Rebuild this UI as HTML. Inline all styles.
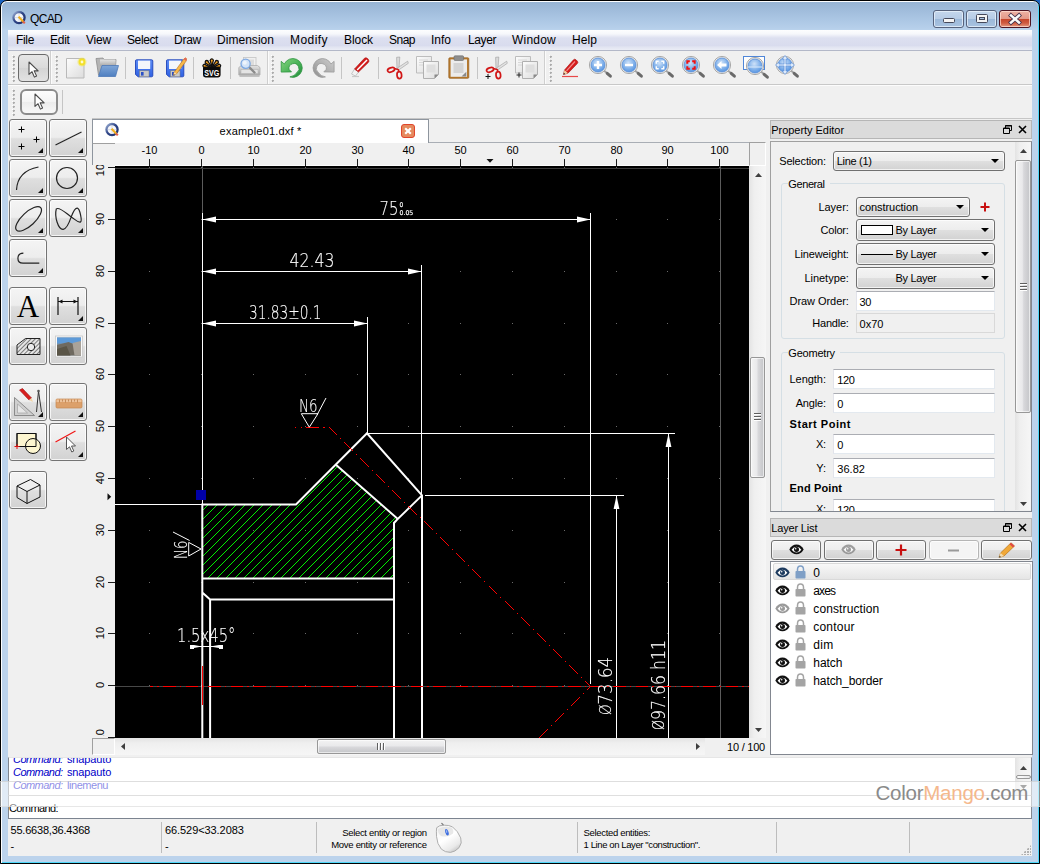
<!DOCTYPE html><html><head><meta charset="utf-8"><title>QCAD</title><style>*{box-sizing:border-box;margin:0;padding:0}
html,body{width:1040px;height:864px;overflow:hidden;background:#1a62c0}
body{font-family:"Liberation Sans",sans-serif;font-size:11px;color:#000;position:relative}
.abs{position:absolute}
.t{position:absolute;white-space:nowrap;line-height:1}
svg{position:absolute;overflow:visible}
#frame{position:absolute;left:0;top:0;width:1040px;height:864px;background:#bcd3ec;border:1px solid #000;border-radius:7px 7px 0 0;box-shadow:inset 1px 1px 0 #fdfeff,inset -1px -1px 0 #4fd8fa}
#titlegrad{position:absolute;left:1px;top:1px;width:1036px;height:28px;border-radius:5px 5px 0 0;background:linear-gradient(180deg,#97b4d4 0,#a1bddc 9px,#adc8e5 19px,#b6cfea 26px,#bad3ed 28px)}
#wtitle{left:29px;top:10px;font-size:12px}
#client{position:absolute;left:7px;top:29px;width:1024px;height:826px;background:#f0f0f0}
#menubar{position:absolute;left:0;top:0;width:1024px;height:20px;background:linear-gradient(180deg,#fdfdfe 0,#f6f7fb 4px,#e6e8f4 6.5px,#dde0f0 8px,#d9dcee 15.5px,#e1e4f1 17px,#ebedf6 20px)}
.mi{position:absolute;top:4px;font-size:12px;line-height:14px;white-space:nowrap;color:#000}
#pg{position:absolute;left:-8px;top:-30px;width:1040px;height:864px}
.hl{position:absolute;height:1px}
.vl{position:absolute;width:1px}
.grip{position:absolute;width:3px;background-image:radial-gradient(circle at 1.7px 1.7px,#ababab 0.8px,rgba(171,171,171,0) 1.4px),radial-gradient(circle at 0.8px 0.8px,#fff 0.7px,rgba(255,255,255,0) 1.2px);background-size:3px 4px}
.tsep{position:absolute;width:1px;background:#c5c5c5}
.tb{position:absolute;width:38px;height:38px;border:1px solid #747474;border-radius:3px;background:linear-gradient(180deg,#f4f4f4 0,#ededed 48%,#dfdfdf 52%,#d2d2d2 100%);box-shadow:inset 0 0 0 1px rgba(255,255,255,.75)}
.tb svg{left:0;top:0}
.tb .ar{position:absolute;right:3px;bottom:3px;width:0;height:0;border-left:5px solid transparent;border-bottom:5px solid #111}
.sbv{position:absolute;width:17px;background:linear-gradient(90deg,#e3e3e3 0,#efefef 30%,#f6f6f6 100%)}
.sbh{position:absolute;height:17px;background:linear-gradient(180deg,#e3e3e3 0,#efefef 30%,#f6f6f6 100%)}
.thv{position:absolute;border:1px solid #979797;border-radius:2px;background:linear-gradient(90deg,#f3f3f3 0,#e9e9eb 45%,#d8d8db 55%,#c4c5c8 100%);box-shadow:inset 0 0 0 1px rgba(255,255,255,.6)}
.thh{position:absolute;border:1px solid #979797;border-radius:2px;background:linear-gradient(180deg,#f3f3f3 0,#e9e9eb 45%,#d8d8db 55%,#c4c5c8 100%);box-shadow:inset 0 0 0 1px rgba(255,255,255,.6)}
.dock{position:absolute;height:19px;background:#dbdbdb;border:1px solid #b6b6b6;font-size:11px;line-height:16px;padding-left:1px;white-space:nowrap}
.lbl{position:absolute;white-space:nowrap;font-size:11px;line-height:13px;text-align:right}
.cmb{position:absolute;border:1px solid #707070;border-radius:3px;background:linear-gradient(180deg,#f4f4f4 0,#ededed 48%,#dfdfdf 52%,#d2d2d2 100%);box-shadow:inset 0 0 0 1px rgba(255,255,255,.7);font-size:11px;line-height:13px;white-space:nowrap}
.cmb span{position:absolute;top:3px}
.cmb i{position:absolute;right:5px;top:8px;width:0;height:0;border-left:4px solid transparent;border-right:4px solid transparent;border-top:4.5px solid #000}
.fld{position:absolute;background:#fff;border:1px solid #e3e9ef;border-top-color:#abadb3;border-left-color:#e2e3ea;font-size:11px;line-height:13px;white-space:nowrap;padding:3px 0 0 3px}
.grp{position:absolute;border:1px solid #d5dfe5;border-radius:3px}
.grp b{position:absolute;left:6px;top:-8px;background:#f0f0f0;padding:0 2px;font-weight:normal;font-size:11px;line-height:13px}
.lbtn{position:absolute;top:540px;height:20px;border:1px solid #707070;border-radius:3px;background:linear-gradient(180deg,#f4f4f4 0,#ededed 48%,#dfdfdf 52%,#d2d2d2 100%);box-shadow:inset 0 0 0 1px rgba(255,255,255,.7)}
.lrow{position:absolute;left:813px;font-size:12px;line-height:13px;white-space:nowrap}
</style></head><body>
<div id="frame"><div id="titlegrad"></div>
<div class="abs" style="left:932px;top:9px;width:31px;height:18px;border:1px solid #56627c;border-radius:3px;background:linear-gradient(180deg,#c4d6ec 0,#b7cce6 48%,#9cb9da 52%,#a9c3e0 100%);box-shadow:inset 0 0 0 1px rgba(235,243,252,.75)"></div>
<div class="abs" style="left:965px;top:9px;width:31px;height:18px;border:1px solid #56627c;border-radius:3px;background:linear-gradient(180deg,#c4d6ec 0,#b7cce6 48%,#9cb9da 52%,#a9c3e0 100%);box-shadow:inset 0 0 0 1px rgba(235,243,252,.75)"></div>
<div class="abs" style="left:998px;top:9px;width:32px;height:18px;border:1px solid #4e1422;border-radius:3px;background:linear-gradient(180deg,#eeb2a4 0,#e49a8a 47%,#c6462c 52%,#cf5a40 75%,#e49880 100%);box-shadow:inset 0 0 0 1px rgba(255,225,215,.7)"></div>
<div class="abs" style="left:942px;top:17px;width:12px;height:5px;border:1px solid #45485a;background:#f4f4f4;border-radius:1.5px"></div>
<div class="abs" style="left:975px;top:13px;width:12px;height:9px;border:1px solid #45485a;background:#f4f4f4;border-radius:1.5px"></div><div class="abs" style="left:978px;top:16px;width:6px;height:3px;border:1px solid #45485a;background:#a9c3e0"></div>
<svg style="left:1007px;top:12px" width="14" height="12"><path d="M3 2.5 L11 9.5 M11 2.5 L3 9.5" stroke="#45304a" stroke-width="4.200" stroke-linecap="square"/><path d="M3 2.5 L11 9.5 M11 2.5 L3 9.5" stroke="#fafafa" stroke-width="2.600" stroke-linecap="square"/></svg>
<svg style="left:11px;top:9px" width="17" height="17"><defs><linearGradient id="gQ2" x1="0" y1="0" x2="1" y2="1"><stop offset="0" stop-color="#9fb2d6"/><stop offset="0.45" stop-color="#2f4688"/><stop offset="1" stop-color="#1f2f6a"/></linearGradient></defs><circle cx="7" cy="7.6" r="5.6" fill="#f6f7fa" stroke="url(#gQ2)" stroke-width="2.3"/><path d="M7 3.5v8M3 7.600h8" stroke="#c9cede" stroke-width="0.7"/><path d="M6.6 6.8 L11.3 11.8" stroke="#f2b01e" stroke-width="2.1"/><path d="M11 11.5 L12.8 13.4" stroke="#e2604a" stroke-width="2.1"/></svg>
<div class="t" style="font-size:12px;line-height:12px;letter-spacing:-0.668px;left:29.00px;top:12.00px;">QCAD</div>
<div id="client">
<div id="menubar">
<div class="t" style="font-size:12px;line-height:12px;letter-spacing:-0.334px;left:8.00px;top:4.00px;">File</div>
<div class="t" style="font-size:12px;line-height:12px;letter-spacing:-0.269px;left:42.00px;top:4.00px;">Edit</div>
<div class="t" style="font-size:12px;line-height:12px;letter-spacing:-0.198px;left:78.00px;top:4.00px;">View</div>
<div class="t" style="font-size:12px;line-height:12px;letter-spacing:-0.392px;left:119.00px;top:4.00px;">Select</div>
<div class="t" style="font-size:12px;line-height:12px;letter-spacing:-0.250px;left:166.00px;top:4.00px;">Draw</div>
<div class="t" style="font-size:12px;line-height:12px;letter-spacing:0.035px;left:209.00px;top:4.00px;">Dimension</div>
<div class="t" style="font-size:12px;line-height:12px;letter-spacing:0.443px;left:282.00px;top:4.00px;">Modify</div>
<div class="t" style="font-size:12px;line-height:12px;letter-spacing:-0.069px;left:336.00px;top:4.00px;">Block</div>
<div class="t" style="font-size:12px;line-height:12px;letter-spacing:-0.506px;left:381.00px;top:4.00px;">Snap</div>
<div class="t" style="font-size:12px;line-height:12px;letter-spacing:-0.003px;left:423.00px;top:4.00px;">Info</div>
<div class="t" style="font-size:12px;line-height:12px;letter-spacing:-0.403px;left:460.00px;top:4.00px;">Layer</div>
<div class="t" style="font-size:12px;line-height:12px;letter-spacing:0.220px;left:504.00px;top:4.00px;">Window</div>
<div class="t" style="font-size:12px;line-height:12px;letter-spacing:0.080px;left:564.00px;top:4.00px;">Help</div>
</div>
<div id="pg">
<div class="hl" style="left:8px;top:50px;width:1024px;background:#b3b8c8"></div>
<div class="hl" style="left:8px;top:84px;width:1024px;background:#c8c8c8"></div>
<div class="hl" style="left:8px;top:85px;width:1024px;background:#fcfcfc"></div>
<div class="vl" style="left:50px;top:51px;height:33px;background:#cfcfcf"></div>
<div class="vl" style="left:51px;top:51px;height:33px;background:#fbfbfb"></div>
<div class="vl" style="left:267px;top:51px;height:33px;background:#cfcfcf"></div>
<div class="vl" style="left:268px;top:51px;height:33px;background:#fbfbfb"></div>
<div class="vl" style="left:544px;top:51px;height:33px;background:#cfcfcf"></div>
<div class="vl" style="left:545px;top:51px;height:33px;background:#fbfbfb"></div>
<div class="grip" style="left:12px;top:55px;height:28px"></div>
<div class="grip" style="left:55px;top:55px;height:28px"></div>
<div class="grip" style="left:271px;top:55px;height:28px"></div>
<div class="grip" style="left:549px;top:55px;height:28px"></div>
<div class="grip" style="left:12px;top:89px;height:28px"></div>
<div class="tsep" style="left:125px;top:57px;height:22px"></div>
<div class="tsep" style="left:193px;top:57px;height:22px"></div>
<div class="tsep" style="left:230px;top:57px;height:22px"></div>
<div class="tsep" style="left:341px;top:57px;height:22px"></div>
<div class="tsep" style="left:378px;top:57px;height:22px"></div>
<div class="tsep" style="left:477px;top:57px;height:22px"></div>
<div class="tsep" style="left:62px;top:90px;height:24px"></div>
<div class="abs" style="left:18px;top:54px;width:31px;height:28px;border:1.5px solid #6a6a6a;border-radius:4px;background:linear-gradient(180deg,#e6e6e6,#dadada 50%,#d4d4d4 51%,#e2e2e2)"></div>
<div class="abs" style="left:20px;top:89px;width:38px;height:26px;border:2px solid #8c8c8c;border-radius:6px;background:linear-gradient(180deg,#fdfdfd,#f4f4f4 50%,#ececec 51%,#f8f8f8)"></div>
<svg style="left:28.5px;top:62px" width="12" height="16"><g transform="scale(1.08)"><path d="M0 0 L0 11.5 L2.8 9 L5 14 L7 13 L4.8 8.2 L8.5 8.2 Z" fill="#fff" stroke="#4a4a4a" stroke-width="1" stroke-linejoin="round"/></g></svg>
<svg style="left:34.5px;top:93.5px" width="12" height="16"><g transform="scale(1.08)"><path d="M0 0 L0 11.5 L2.8 9 L5 14 L7 13 L4.8 8.2 L8.5 8.2 Z" fill="#fff" stroke="#4a4a4a" stroke-width="1" stroke-linejoin="round"/></g></svg>
<svg width="0" height="0" style="position:absolute"><defs>
<linearGradient id="gPage" x1="0" y1="0" x2="1" y2="1"><stop offset="0" stop-color="#fdfdfd"/><stop offset="1" stop-color="#dcdcdc"/></linearGradient>
<linearGradient id="gBlue" x1="0" y1="0" x2="0" y2="1"><stop offset="0" stop-color="#7fa6d8"/><stop offset="1" stop-color="#4f7fc0"/></linearGradient>
<linearGradient id="gFlop" x1="0" y1="0" x2="0" y2="1"><stop offset="0" stop-color="#5c8cf6"/><stop offset="1" stop-color="#3062e2"/></linearGradient>
<linearGradient id="gGray" x1="0" y1="0" x2="0" y2="1"><stop offset="0" stop-color="#e4e4e4"/><stop offset="1" stop-color="#a8a8a8"/></linearGradient>
<radialGradient id="gLens" cx="0.45" cy="0.35" r="0.7"><stop offset="0" stop-color="#cfe2f8"/><stop offset="0.6" stop-color="#7fb0ea"/><stop offset="1" stop-color="#4f8fe0"/></radialGradient>
<linearGradient id="gGreen" x1="0" y1="0" x2="1" y2="1"><stop offset="0" stop-color="#86d47e"/><stop offset="0.5" stop-color="#4cb45a"/><stop offset="1" stop-color="#1f8c3a"/></linearGradient>
<linearGradient id="gRedo" x1="0" y1="0" x2="1" y2="1"><stop offset="0" stop-color="#cfcfcf"/><stop offset="1" stop-color="#8e8e8e"/></linearGradient>
<g id="mag"><path d="M6.5 6 L12 10.8" stroke="#a4a4a4" stroke-width="2" stroke-linecap="round"/><path d="M9.2 8.4 L12.4 11.2" stroke="#6a6a6a" stroke-width="3" stroke-linecap="round"/><circle cx="0" cy="0" r="8.6" fill="#e8e8e8" stroke="#a9a9a9" stroke-width="1"/><circle cx="0" cy="0" r="7" fill="url(#gLens)" stroke="#5b8fd8" stroke-width="0.8"/></g>
<g id="sciss"><path d="M10.6 1.3 L13.8 1 L12.9 13.8 L11 13.4 Z" fill="#dadada" stroke="#9c9c9c" stroke-width="0.6"/><path d="M21.7 5.2 L22.3 7.3 L12.6 14 L11.3 12.1 Z" fill="#e2e2e2" stroke="#9c9c9c" stroke-width="0.6"/><path d="M8.4 12.6 L12.2 13.6 L13 15.8" fill="none" stroke="#d11616" stroke-width="1.6"/><ellipse cx="5.1" cy="13.8" rx="3.7" ry="2.1" transform="rotate(-20 5.1 13.8)" fill="none" stroke="#d11616" stroke-width="1.7"/><ellipse cx="13.3" cy="19.1" rx="2.3" ry="3.5" transform="rotate(-6 13.3 19.1)" fill="none" stroke="#d11616" stroke-width="1.7"/></g>
<g id="copy"><path d="M0.5 0.5 H15.5 V17 H0.5 Z" fill="url(#gPage)" stroke="#bdbdbd"/><path d="M3 4h9M3 6.5h9M3 9h5" stroke="#d0d0d0" stroke-width="0.8"/><path d="M7.5 5.5 H22.5 V18.5 L18.5 22.5 H7.5 Z" fill="url(#gPage)" stroke="#b0b0b0"/><rect x="10.5" y="8.5" width="9" height="8" fill="#dedede"/><path d="M18.5 22.5 V18.5 H22.5 Z" fill="#8a8a8a"/></g>
</defs></svg>
<svg style="left:66px;top:57px" width="20" height="22"><path d="M0.5 1.5 H18 V21 H0.5 Z" fill="url(#gPage)" stroke="#b9b9b9"/><circle cx="16" cy="5" r="4.6" fill="#f5e640" opacity="0.45"/><circle cx="16" cy="5" r="3.4" fill="#f3e02a"/><circle cx="16" cy="5" r="1.4" fill="#fffbd0"/></svg>
<svg style="left:95px;top:57px" width="24" height="21"><path d="M1 1.5 L3.5 18 H20 L21 2.5 H9 L8 1 Z" fill="#b4b4b4" stroke="#8d8d8d" stroke-width="0.8"/><path d="M5 2.5 H20.5 V9 H5 Z" fill="url(#gGray)"/><path d="M3.5 19.5 L7 8.5 H23.5 L20.5 19.5 Z" fill="url(#gBlue)" stroke="#4d78b8" stroke-width="0.8"/></svg>
<svg style="left:135px;top:59px" width="19" height="19"><path d="M1.5 0.8 H16.5 Q17.8 0.8 17.8 2 V16.5 Q17.8 17.8 16.5 17.8 H3.2 L0.5 15.5 V2 Q0.5 0.8 1.5 0.8 Z" fill="url(#gFlop)" stroke="#1f43b8" stroke-width="0.9"/><rect x="3" y="1.6" width="12.2" height="8.4" fill="#f4f6fb"/><rect x="4.5" y="11.8" width="9.5" height="6" fill="#c9c9c9" stroke="#7d7d7d" stroke-width="0.5"/><rect x="6" y="13" width="2.6" height="3.6" fill="#2a50c8"/></svg>
<svg style="left:166px;top:59px" width="22" height="19"><path d="M1.5 0.8 H16.5 Q17.8 0.8 17.8 2 V16.5 Q17.8 17.8 16.5 17.8 H3.2 L0.5 15.5 V2 Q0.5 0.8 1.5 0.8 Z" fill="url(#gFlop)" stroke="#1f43b8" stroke-width="0.9"/><rect x="3" y="1.6" width="12.2" height="8.4" fill="#f4f6fb"/><rect x="4.5" y="11.8" width="9.5" height="6" fill="#c9c9c9" stroke="#7d7d7d" stroke-width="0.5"/><rect x="6" y="13" width="2.6" height="3.6" fill="#2a50c8"/><path d="M8.3 13.2 L17.6 0.2 L19.4 -1.2 L20.6 -0.3 L20.2 2 L10.6 14.8 L7.4 16.2 Z" fill="#f7b84a" stroke="#b8701a" stroke-width="0.6"/><path d="M17.6 0.2 L19.4 -1.2 L20.6 -0.3 L20.2 2 Z" fill="#e8605a"/><path d="M7.4 16.2 L8.3 13.2 L10.6 14.8 Z" fill="#f4dcb0"/><path d="M7.4 16.2 L7.8 14.9 L8.8 15.6 Z" fill="#333"/></svg>
<svg style="left:202px;top:58px" width="20" height="20"><g fill="#f9a21c" stroke="#111" stroke-width="1.3" stroke-linejoin="round"><path d="M9.8 9 L8.6 3.6 A1.6 1.6 0 1 1 11 3.6 Z"/><path d="M9.8 9 L4.6 5.7 A1.6 1.6 0 1 1 6.4 4 Z"/><path d="M9.8 9 L13.2 4 A1.6 1.6 0 1 1 15 5.7 Z"/><path d="M9.8 9.5 L3 9.2 A1.5 1.5 0 1 1 3.6 6.8 Z"/><path d="M9.8 9.5 L16 6.8 A1.5 1.5 0 1 1 16.6 9.2 Z"/></g><path d="M1 9.2 H18.6 V17 Q18.6 19.4 16.2 19.4 H3.4 Q1 19.4 1 17 Z" fill="#0b0b0b"/><text x="9.8" y="18" font-size="9.5" font-weight="bold" fill="#fff" text-anchor="middle" textLength="15" lengthAdjust="spacingAndGlyphs" font-family="Liberation Sans,sans-serif">SVG</text></svg>
<svg style="left:238px;top:56px" width="23" height="23"><rect x="5.5" y="1.5" width="12.5" height="10" fill="#f0f0f0" stroke="#c4c4c4" stroke-width="0.8"/><rect x="7.5" y="3.5" width="8.5" height="6" fill="#dcdcdc"/><path d="M0.8 11.5 L3.5 9.5 H19.5 L22 11.5 V19 H0.8 Z" fill="url(#gGray)" stroke="#adadad" stroke-width="0.8"/><rect x="3" y="13.5" width="17" height="4" fill="#e4e4e4" stroke="#b0b0b0" stroke-width="0.5"/><rect x="1.5" y="19.2" width="20" height="1.8" fill="#9a9a9a" opacity="0.55"/><path d="M11 11 L16.5 16.5" stroke="#8a8a8a" stroke-width="2.4" stroke-linecap="round"/><circle cx="7.6" cy="7.8" r="4.6" fill="#d4e4f8" stroke="#7da8e2" stroke-width="1.3"/><circle cx="6.8" cy="6.8" r="2" fill="#f2f7fd" opacity="0.85"/></svg>
<svg style="left:280px;top:58px" width="24" height="20"><path d="M1.2 3.3 L1.2 14.1 L11.5 13.9 L9 11.3 A5 5 0 1 1 17 14.5 Q14.5 18.3 9.9 18.9 A9.4 9.4 0 1 0 4.3 6 Z" fill="url(#gGreen)" stroke="#2f9440" stroke-width="0.8" stroke-linejoin="round"/></svg>
<svg style="left:311px;top:58px" width="24" height="20"><g transform="translate(24.3 0) scale(-1 1)"><path d="M1.2 3.3 L1.2 14.1 L11.5 13.9 L9 11.3 A5 5 0 1 1 17 14.5 Q14.5 18.3 9.9 18.9 A9.4 9.4 0 1 0 4.3 6 Z" fill="url(#gRedo)" stroke="#9a9a9a" stroke-width="0.8" stroke-linejoin="round"/></g></svg>
<svg style="left:350px;top:57px" width="20" height="22"><path d="M2 19.5 H9" stroke="#c9c9c9" stroke-width="1.2"/><path d="M1.5 17 L4.5 12 L8.5 15 L5.5 19 Z" fill="#f2f2f2" stroke="#b5b5b5" stroke-width="0.7"/><path d="M4.5 12 L14.5 1.2 Q16 0 17.5 1.5 L18.6 2.8 Q19.5 4.2 18.3 5.5 L8.5 15 Z" fill="#d21a1a" stroke="#a81010" stroke-width="0.6"/><path d="M7.2 13 L17 3" stroke="#fff" stroke-width="1.5"/></svg>
<svg style="left:386px;top:56px" width="23" height="24"><use href="#sciss"/></svg>
<svg style="left:416px;top:56px" width="24" height="24"><use href="#copy"/></svg>
<svg style="left:448px;top:55px" width="22" height="24"><rect x="0.8" y="2.8" width="20" height="20.5" rx="1" fill="#b67a2e" stroke="#9a6220" stroke-width="0.7"/><rect x="2.6" y="4.4" width="16.4" height="17.4" fill="#ececec"/><rect x="5.5" y="8" width="10" height="10" fill="#d4d4d4"/><path d="M13.5 21.5 L18.3 16.8 V21.5 Z" fill="#8a8a8a"/><rect x="6" y="0.8" width="9.6" height="4.7" rx="1" fill="#8e8e8e" stroke="#6a6a6a" stroke-width="0.6"/></svg>
<svg style="left:485px;top:56px" width="23" height="24"><use href="#sciss"/><path d="M0.5 20.5h5M3 18v5" stroke="#111" stroke-width="1"/></svg>
<svg style="left:515px;top:56px" width="24" height="24"><use href="#copy"/><path d="M1.5 19h5M4 16.5v5" stroke="#222" stroke-width="1"/></svg>
<svg style="left:561px;top:58px" width="19" height="20"><path d="M1 18.5 H17" stroke="#e84848" stroke-width="1.2"/><path d="M2.5 16.5 L3.5 12 L12.5 1.8 Q13.6 0.6 15 1.8 L16.4 3.2 Q17.4 4.5 16.3 5.6 L7 15.2 Z" fill="#d61c1c" stroke="#a50f0f" stroke-width="0.6"/><path d="M5.5 12.8 L14 3.5" stroke="#f28c8c" stroke-width="1.2"/><path d="M2.5 16.5 L3.5 12 L7 15.2 Z" fill="#f0d3a6"/><path d="M2.5 16.5 L2.9 14.8 L4.2 15.9 Z" fill="#222"/></svg>
<svg style="left:598px;top:65px" width="1" height="1"><use href="#mag"/><path d="M-4 0h8M0 -4v8" stroke="#fff" stroke-width="2.4"/></svg>
<svg style="left:629px;top:65px" width="1" height="1"><use href="#mag"/><path d="M-4 0h8" stroke="#fff" stroke-width="2.4"/></svg>
<svg style="left:660px;top:65px" width="1" height="1"><use href="#mag"/><path d="M-3.7 -1.300v-2.400h2.400M1.3 -3.700h2.400v2.400M3.7 1.300v2.400h-2.400M-1.3 3.700h-2.400v-2.4" stroke="#fff" stroke-width="1.5" fill="none"/></svg>
<svg style="left:691px;top:65px" width="1" height="1"><use href="#mag"/><path d="M-3.7 -1.2v-2.5h2.5M1.2 -3.7h2.5v2.5M3.7 1.2v2.5h-2.5M-1.2 3.7h-2.5v-2.5" stroke="#f01010" stroke-width="2" fill="none"/></svg>
<svg style="left:722px;top:65px" width="1" height="1"><use href="#mag"/><path d="M-5 0 L-0.5 -4 V-1.6 H4.5 V1.6 H-0.5 V4 Z" fill="#fff"/></svg>
<div class="abs" style="left:743px;top:56px;width:22px;height:14px;border:1px solid #4f86d8;background:#fdfdfd"></div>
<svg style="left:755px;top:66px" width="1" height="1"><use href="#mag"/><path d="M-7 1 H7" stroke="#dcebfb" stroke-width="1"/></svg>
<svg style="left:785px;top:65px" width="1" height="1"><use href="#mag"/><path d="M0 -9.5 L3 -6 H1 V-1 H6 V-3 L9.5 0 L6 3 V1 H1 V6 H3 L0 9.5 L-3 6 H-1 V1 H-6 V3 L-9.5 0 L-6 -3 V-1 H-1 V-6 H-3 Z" fill="#ddeafa" stroke="#5b8fd8" stroke-width="0.7"/></svg>
<div class="tb" style="left:9px;top:119px"><svg width="36" height="36" viewBox="0 0 36 36"><g transform="translate(0.5 1)"><path d="M8 8.5h6M11 5.5v6M8 25.5h6M11 22.5v6M23 18.5h6M26 15.5v6" stroke="#000" stroke-width="1" fill="none"/></g></svg><span class="ar"></span></div>
<div class="tb" style="left:49px;top:119px"><svg width="36" height="36" viewBox="0 0 36 36"><g transform="translate(0.5 1)"><path d="M5 24 L31 11" stroke="#222" stroke-width="1.2" fill="none"/></g></svg><span class="ar"></span></div>
<div class="tb" style="left:9px;top:159px"><svg width="36" height="36" viewBox="0 0 36 36"><g transform="translate(0.5 1)"><path d="M6 29 Q7 10 28 6" stroke="#222" stroke-width="1.2" fill="none"/></g></svg><span class="ar"></span></div>
<div class="tb" style="left:49px;top:159px"><svg width="36" height="36" viewBox="0 0 36 36"><g transform="translate(0.5 1)"><circle cx="16.5" cy="17" r="10.5" stroke="#222" stroke-width="1.2" fill="none"/></g></svg><span class="ar"></span></div>
<div class="tb" style="left:9px;top:199px"><svg width="36" height="36" viewBox="0 0 36 36"><g transform="translate(0.5 1)"><ellipse cx="18.1" cy="17.9" rx="16.5" ry="6.6" transform="rotate(-43 18.1 17.9)" stroke="#222" stroke-width="1.2" fill="none"/></g></svg><span class="ar"></span></div>
<div class="tb" style="left:49px;top:199px"><svg width="36" height="36" viewBox="0 0 36 36"><g transform="translate(0.5 1)"><path d="M5.8 7.9 C3.8 15.9 7.7 28.8 12.7 28.3 C16.7 27.8 19.7 18.9 20.7 15.9 C22.2 11.9 24.7 6.9 26.8 7.1 C29.6 7.7 31.6 19.9 30.1 20.9 C27.6 22.1 24.7 18.4 20.7 15.9 C15.7 12.4 8.7 5.5 5.8 7.9 Z" stroke="#222" stroke-width="1.2" fill="none"/></g></svg><span class="ar"></span></div>
<div class="tb" style="left:9px;top:239px"><svg width="36" height="36" viewBox="0 0 36 36"><g transform="translate(0.5 1)"><path d="M12.9 12.2 Q7.4 12.4 7.4 17.2 Q7.4 22.2 12.5 22.2 H28.8" stroke="#222" stroke-width="1.2" fill="none"/></g></svg><span class="ar"></span></div>
<div class="tb" style="left:9px;top:287px"><svg width="36" height="36" viewBox="0 0 36 36"><g transform="translate(0.5 1)"><text x="17.5" y="28" font-family="Liberation Serif,serif" font-size="31" text-anchor="middle" fill="#000">A</text></g></svg></div>
<div class="tb" style="left:49px;top:287px"><svg width="36" height="36" viewBox="0 0 36 36"><g transform="translate(0.5 1)"><path d="M7.5 8v18M27.5 8v18M8 12.5h19" stroke="#111" stroke-width="1.2" fill="none"/><path d="M8 12.5l4 -2v4zM27 12.5l-4 -2v4z" fill="#111"/></g></svg><span class="ar"></span></div>
<div class="tb" style="left:9px;top:327px"><svg width="36" height="36" viewBox="0 0 36 36"><g transform="translate(0.5 1)"><defs><pattern id="hp" width="3" height="3" patternUnits="userSpaceOnUse" patternTransform="rotate(45)"><rect width="3" height="3" fill="#e6e6e6"/><path d="M0 0V3" stroke="#333" stroke-width="1.2"/></pattern></defs><path d="M6.5 16 L15 9.5 H29.5 V25.5 H6.5 Z" fill="url(#hp)" stroke="#222" stroke-width="1"/><circle cx="20.5" cy="18" r="3.7" fill="#ececec" stroke="#222" stroke-width="1"/></g></svg></div>
<div class="tb" style="left:49px;top:327px"><svg width="36" height="36" viewBox="0 0 36 36"><g transform="translate(0.5 1)"><rect x="5" y="7" width="27" height="21" fill="#fafafa" stroke="#c9c9c9" stroke-width="0.8"/><rect x="6.5" y="8.5" width="24" height="18" fill="#7e8f9d"/><rect x="6.5" y="8.5" width="24" height="6" fill="#5d9ad8"/><path d="M6.5 16 L18 13 L30.5 18 V26.5 H6.5 Z" fill="#6f6a60"/><path d="M22 14 L30.5 12 V26.5 H24 Z" fill="#a9a39a"/><path d="M6.5 20 L16 17 L20 26.5 H6.5 Z" fill="#5a5547"/></g></svg></div>
<div class="tb" style="left:9px;top:383px"><svg width="36" height="36" viewBox="0 0 36 36"><g transform="translate(0.5 1)"><path d="M4 30.5 L4 12.5 L24 30.5 Z" fill="#cfcfcf" stroke="#777" stroke-width="0.8"/><path d="M7 28 L7 19 L17 28 Z" fill="#e6e6e6" stroke="#999" stroke-width="0.6"/><path d="M9 5 L12 3.5 L21 13 L18.5 15 Z" fill="#d81e1e" stroke="#9c1010" stroke-width="0.6"/><path d="M18.5 15 L21 13 L22.5 17 Z" fill="#f0d3a6"/><path d="M28 6 L26 27 M28 6 L31 27" stroke="#333" stroke-width="1" fill="none"/><circle cx="28" cy="6" r="1.3" fill="#555"/></g></svg><span class="ar"></span></div>
<div class="tb" style="left:49px;top:383px"><svg width="36" height="36" viewBox="0 0 36 36"><g transform="translate(0.5 1)"><rect x="5.5" y="14" width="26" height="9" rx="1.2" fill="#dca06a" stroke="#c48850" stroke-width="0.7"/><rect x="6" y="14.5" width="25" height="2.5" fill="#edc29a"/><path d="M9 14.5v3M12 14.5v2M15 14.5v3M18 14.5v2M21 14.5v3M24 14.5v2M27 14.5v3" stroke="#b07440" stroke-width="0.7"/></g></svg><span class="ar"></span></div>
<div class="tb" style="left:9px;top:423px"><svg width="36" height="36" viewBox="0 0 36 36"><g transform="translate(0.5 1)"><rect x="6.5" y="8.5" width="19" height="13" fill="#fdf6d0" stroke="#111" stroke-width="1"/><circle cx="22.5" cy="21" r="7.5" fill="#fdf6d0" stroke="#111" stroke-width="1"/><path d="M6.5 8.5 H25.5 V21.5 H6.5 Z" fill="none" stroke="#111" stroke-width="1"/><path d="M4 21.5h5M6.5 19v5" stroke="#e01010" stroke-width="1"/></g></svg></div>
<div class="tb" style="left:49px;top:423px"><svg width="36" height="36" viewBox="0 0 36 36"><g transform="translate(0.5 1)"><path d="M5 17 L25 6" stroke="#f01818" stroke-width="1.3"/><path d="M16 12 L16 24.5 L19 21.8 L21.3 27 L23.3 26 L21 21 L25 21 Z" fill="#fff" stroke="#555" stroke-width="1" stroke-linejoin="round"/></g></svg><span class="ar"></span></div>
<div class="tb" style="left:9px;top:471px"><svg width="36" height="36" viewBox="0 0 36 36"><g transform="translate(0.5 1)"><path d="M6.5 13 L20 6.5 L29.5 12 V24 L16.5 30.5 L6.5 24.5 Z M6.5 13 L16.5 18.5 L29.5 12 M16.5 18.5 V30.5" fill="none" stroke="#111" stroke-width="1" stroke-linejoin="round"/></g></svg></div>
<div class="hl" style="left:92px;top:118px;width:940px;background:#c6c6c6"></div>
<div class="hl" style="left:428px;top:142px;width:338px;background:#a9aeb5"></div>
<div class="abs" style="left:92px;top:119px;width:337px;height:24px;background:#fff;border-left:1px solid #8e959e;border-right:1px solid #8e959e;border-top:1px solid #8e959e"></div>
<div class="t" style="font-size:11px;line-height:11px;letter-spacing:0.208px;left:219.60px;top:126.00px;">example01.dxf *</div>
<div class="abs" style="left:401px;top:124px;width:14px;height:14px;border:1px solid #e0452c;border-radius:3px;background:#e58a5e"></div>
<svg style="left:401px;top:124px" width="14" height="14"><path d="M4.2 4.2 L9.8 9.8 M9.8 4.2 L4.2 9.8" stroke="#fff" stroke-width="2.2" stroke-linecap="butt"/></svg>
<svg style="left:105px;top:122px" width="17" height="17"><defs><linearGradient id="gQ" x1="0" y1="0" x2="1" y2="1"><stop offset="0" stop-color="#9fb2d6"/><stop offset="0.45" stop-color="#2f4688"/><stop offset="1" stop-color="#1f2f6a"/></linearGradient></defs><circle cx="7" cy="7.6" r="5.6" fill="#f6f7fa" stroke="url(#gQ)" stroke-width="2.3"/><path d="M7 3.5v8M3 7.600h8" stroke="#c9cede" stroke-width="0.7"/><path d="M6.6 6.8 L11.3 11.8" stroke="#f2b01e" stroke-width="2.1"/><path d="M11 11.5 L12.8 13.4" stroke="#e2604a" stroke-width="2.1"/></svg>
<div class="abs" style="left:92px;top:143px;width:23px;height:22px;background:#f0f0f0;border-left:1px solid #8e959e;border-top:1px solid #a0a0a0"></div>
<div class="abs" style="left:115px;top:143px;width:634px;height:23px;background:#f0f0f0"></div>
<div class="hl" style="left:92px;top:165px;width:657px;background:#fbfbfb"></div>
<div class="abs" style="left:92px;top:165px;width:23px;height:573px;background:#f0f0f0;overflow:hidden" id="vr">
<div class="t" style="left:-12px;top:566.1px;width:40px;height:12px;line-height:12px;text-align:center;font-size:11px;transform:rotate(-90deg)">-10</div>
<div class="hl" style="left:16px;top:572px;width:7px;background:#1c1c1c"></div>
<div class="t" style="left:-12px;top:514.1px;width:40px;height:12px;line-height:12px;text-align:center;font-size:11px;transform:rotate(-90deg)">0</div>
<div class="hl" style="left:16px;top:520px;width:7px;background:#1c1c1c"></div>
<div class="t" style="left:-12px;top:462.1px;width:40px;height:12px;line-height:12px;text-align:center;font-size:11px;transform:rotate(-90deg)">10</div>
<div class="hl" style="left:16px;top:468px;width:7px;background:#1c1c1c"></div>
<div class="t" style="left:-12px;top:411.1px;width:40px;height:12px;line-height:12px;text-align:center;font-size:11px;transform:rotate(-90deg)">20</div>
<div class="hl" style="left:16px;top:417px;width:7px;background:#1c1c1c"></div>
<div class="t" style="left:-12px;top:359.1px;width:40px;height:12px;line-height:12px;text-align:center;font-size:11px;transform:rotate(-90deg)">30</div>
<div class="hl" style="left:16px;top:365px;width:7px;background:#1c1c1c"></div>
<div class="t" style="left:-12px;top:307.1px;width:40px;height:12px;line-height:12px;text-align:center;font-size:11px;transform:rotate(-90deg)">40</div>
<div class="hl" style="left:16px;top:313px;width:7px;background:#1c1c1c"></div>
<div class="t" style="left:-12px;top:255.1px;width:40px;height:12px;line-height:12px;text-align:center;font-size:11px;transform:rotate(-90deg)">50</div>
<div class="hl" style="left:16px;top:261px;width:7px;background:#1c1c1c"></div>
<div class="t" style="left:-12px;top:203.1px;width:40px;height:12px;line-height:12px;text-align:center;font-size:11px;transform:rotate(-90deg)">60</div>
<div class="hl" style="left:16px;top:209px;width:7px;background:#1c1c1c"></div>
<div class="t" style="left:-12px;top:152.1px;width:40px;height:12px;line-height:12px;text-align:center;font-size:11px;transform:rotate(-90deg)">70</div>
<div class="hl" style="left:16px;top:158px;width:7px;background:#1c1c1c"></div>
<div class="t" style="left:-12px;top:100.1px;width:40px;height:12px;line-height:12px;text-align:center;font-size:11px;transform:rotate(-90deg)">80</div>
<div class="hl" style="left:16px;top:106px;width:7px;background:#1c1c1c"></div>
<div class="t" style="left:-12px;top:48.1px;width:40px;height:12px;line-height:12px;text-align:center;font-size:11px;transform:rotate(-90deg)">90</div>
<div class="hl" style="left:16px;top:54px;width:7px;background:#1c1c1c"></div>
<div class="t" style="left:-12px;top:-3.9px;width:40px;height:12px;line-height:12px;text-align:center;font-size:11px;transform:rotate(-90deg)">100</div>
<div class="hl" style="left:16px;top:2px;width:7px;background:#1c1c1c"></div>
<div class="abs" style="left:1px;top:570.5px;width:15px;height:3px;background:#f0f0f0"></div>
</div>
<div class="abs" id="cv" style="left:115px;top:166px;width:634px;height:572px;background:#000;overflow:hidden">
<svg style="left:-115px;top:-166px;will-change:transform" width="1040" height="864" viewBox="0 0 1040 864"><path d="M149 685h1v1h-1zM149 633h1v1h-1zM149 582h1v1h-1zM149 530h1v1h-1zM149 478h1v1h-1zM149 426h1v1h-1zM149 374h1v1h-1zM149 323h1v1h-1zM149 271h1v1h-1zM149 219h1v1h-1zM149 167h1v1h-1zM201 685h1v1h-1zM201 633h1v1h-1zM201 582h1v1h-1zM201 530h1v1h-1zM201 478h1v1h-1zM201 426h1v1h-1zM201 374h1v1h-1zM201 323h1v1h-1zM201 271h1v1h-1zM201 219h1v1h-1zM201 167h1v1h-1zM253 685h1v1h-1zM253 633h1v1h-1zM253 582h1v1h-1zM253 530h1v1h-1zM253 478h1v1h-1zM253 426h1v1h-1zM253 374h1v1h-1zM253 323h1v1h-1zM253 271h1v1h-1zM253 219h1v1h-1zM253 167h1v1h-1zM305 685h1v1h-1zM305 633h1v1h-1zM305 582h1v1h-1zM305 530h1v1h-1zM305 478h1v1h-1zM305 426h1v1h-1zM305 374h1v1h-1zM305 323h1v1h-1zM305 271h1v1h-1zM305 219h1v1h-1zM305 167h1v1h-1zM357 685h1v1h-1zM357 633h1v1h-1zM357 582h1v1h-1zM357 530h1v1h-1zM357 478h1v1h-1zM357 426h1v1h-1zM357 374h1v1h-1zM357 323h1v1h-1zM357 271h1v1h-1zM357 219h1v1h-1zM357 167h1v1h-1zM408 685h1v1h-1zM408 633h1v1h-1zM408 582h1v1h-1zM408 530h1v1h-1zM408 478h1v1h-1zM408 426h1v1h-1zM408 374h1v1h-1zM408 323h1v1h-1zM408 271h1v1h-1zM408 219h1v1h-1zM408 167h1v1h-1zM460 685h1v1h-1zM460 633h1v1h-1zM460 582h1v1h-1zM460 530h1v1h-1zM460 478h1v1h-1zM460 426h1v1h-1zM460 374h1v1h-1zM460 323h1v1h-1zM460 271h1v1h-1zM460 219h1v1h-1zM460 167h1v1h-1zM512 685h1v1h-1zM512 633h1v1h-1zM512 582h1v1h-1zM512 530h1v1h-1zM512 478h1v1h-1zM512 426h1v1h-1zM512 374h1v1h-1zM512 323h1v1h-1zM512 271h1v1h-1zM512 219h1v1h-1zM512 167h1v1h-1zM564 685h1v1h-1zM564 633h1v1h-1zM564 582h1v1h-1zM564 530h1v1h-1zM564 478h1v1h-1zM564 426h1v1h-1zM564 374h1v1h-1zM564 323h1v1h-1zM564 271h1v1h-1zM564 219h1v1h-1zM564 167h1v1h-1zM616 685h1v1h-1zM616 633h1v1h-1zM616 582h1v1h-1zM616 530h1v1h-1zM616 478h1v1h-1zM616 426h1v1h-1zM616 374h1v1h-1zM616 323h1v1h-1zM616 271h1v1h-1zM616 219h1v1h-1zM616 167h1v1h-1zM667 685h1v1h-1zM667 633h1v1h-1zM667 582h1v1h-1zM667 530h1v1h-1zM667 478h1v1h-1zM667 426h1v1h-1zM667 374h1v1h-1zM667 323h1v1h-1zM667 271h1v1h-1zM667 219h1v1h-1zM667 167h1v1h-1zM719 685h1v1h-1zM719 633h1v1h-1zM719 582h1v1h-1zM719 530h1v1h-1zM719 478h1v1h-1zM719 426h1v1h-1zM719 374h1v1h-1zM719 323h1v1h-1zM719 271h1v1h-1zM719 219h1v1h-1zM719 167h1v1h-1z" fill="#6a6a6a" shape-rendering="crispEdges"/><g shape-rendering="crispEdges"><line x1="202.5" y1="166" x2="202.5" y2="738" stroke="#5c5c5c" stroke-width="1" /><line x1="115" y1="168.5" x2="749" y2="168.5" stroke="#3a3a3a" stroke-width="1" /><line x1="720.5" y1="166" x2="720.5" y2="738" stroke="#5c5c5c" stroke-width="1" /><line x1="115" y1="686.5" x2="749" y2="686.5" stroke="#484848" stroke-width="1" /><line x1="202.5" y1="213" x2="202.5" y2="506" stroke="#fff" stroke-width="1" /><line x1="202" y1="219.5" x2="590" y2="219.5" stroke="#fff" stroke-width="1" /><line x1="202" y1="271.5" x2="421" y2="271.5" stroke="#fff" stroke-width="1" /><line x1="202" y1="323.5" x2="367" y2="323.5" stroke="#fff" stroke-width="1" /><line x1="590.5" y1="213" x2="590.5" y2="684" stroke="#fff" stroke-width="1" /><line x1="421.5" y1="265" x2="421.5" y2="496" stroke="#fff" stroke-width="1" /><line x1="367.5" y1="317" x2="367.5" y2="434" stroke="#fff" stroke-width="1" /><line x1="367" y1="433.5" x2="675" y2="433.5" stroke="#fff" stroke-width="1" /><line x1="425" y1="495.5" x2="624" y2="495.5" stroke="#fff" stroke-width="1" /><line x1="668.5" y1="433" x2="668.5" y2="738" stroke="#fff" stroke-width="1" /><line x1="616.5" y1="495" x2="616.5" y2="738" stroke="#fff" stroke-width="1" /><line x1="115" y1="504.5" x2="203" y2="504.5" stroke="#fff" stroke-width="1" /><line x1="190" y1="646.5" x2="223" y2="646.5" stroke="#fff" stroke-width="1" /></g><path d="M202.5 219.5 L216.0 216.6 L216.0 222.4 Z" fill="#fff"/><path d="M590.5 219.5 L577.0 222.4 L577.0 216.6 Z" fill="#fff"/><path d="M202.5 271.5 L216.0 268.6 L216.0 274.4 Z" fill="#fff"/><path d="M421.5 271.5 L408.0 274.4 L408.0 268.6 Z" fill="#fff"/><path d="M202.5 323.5 L216.0 320.6 L216.0 326.4 Z" fill="#fff"/><path d="M367.5 323.5 L354.0 326.4 L354.0 320.6 Z" fill="#fff"/><path d="M668.5 433.5 L671.4 447.0 L665.6 447.0 Z" fill="#fff"/><path d="M616.5 495.5 L619.4 509.0 L613.6 509.0 Z" fill="#fff"/><path d="M190 644.5h4v4h-4zM219 644.5h4v4h-4z" fill="#fff" shape-rendering="crispEdges"/><path d="M202 646.5 L194 645 V648Z M210 646.5 L219 645 V648Z" fill="#fff"/><clipPath id="hc"><polygon points="202,505 296,505 336.2,464.9 397.8,518.9 394,523 394,578.5 202,578.5"/></clipPath><path d="M113 600 L273 440M122 600 L282 440M132 600 L292 440M141 600 L301 440M150 600 L310 440M159 600 L319 440M168 600 L328 440M177 600 L337 440M186 600 L346 440M195 600 L355 440M204 600 L364 440M213 600 L373 440M222 600 L382 440M231 600 L391 440M241 600 L401 440M250 600 L410 440M259 600 L419 440M268 600 L428 440M277 600 L437 440M286 600 L446 440M295 600 L455 440M304 600 L464 440M313 600 L473 440M322 600 L482 440M331 600 L491 440M340 600 L500 440M349 600 L509 440M359 600 L519 440M368 600 L528 440M377 600 L537 440" stroke="#00ee00" stroke-width="1" fill="none" clip-path="url(#hc)" shape-rendering="crispEdges"/><path d="M202.3 738 V504.5 H296 L367 433.3 L422 495.4 V738 M422 495.4 L397.8 518.9 L336.2 464.9 M397.8 518.9 L394 523 V738 M202.3 578.5 H394 M202.3 592.5 L210.1 599.4 H394 M210.1 599.4 V738" stroke="#fff" stroke-width="2" fill="none" stroke-linejoin="miter"/><rect x="196" y="490" width="10" height="10" fill="#0000a8" shape-rendering="crispEdges"/><path d="M150 686.5 H749" stroke="#ff0000" stroke-width="1" fill="none" stroke-dasharray="12.5 4.4 1.2 4.4" stroke-dashoffset="9.5" shape-rendering="crispEdges"/><path d="M202.5 666 V705" stroke="#ff0000" stroke-width="1" fill="none" shape-rendering="crispEdges"/><path d="M295 427.5 H325" stroke="#ff0000" stroke-width="1" fill="none" stroke-dasharray="1.2 4.3 1.2 4.3 13 4.3 1.2 4.3 1.2 10" shape-rendering="crispEdges"/><path d="M329.5 427.5 L416.5 514.5 L417.5 514.5 L503.5 600.5 L504.5 600.5 L590.5 686.5 L538.5 738.5" stroke="#ff0000" stroke-width="1" fill="none" stroke-dasharray="12.5 4.4 1.4 4.4" stroke-dashoffset="2.5" shape-rendering="crispEdges"/><text x="379.5" y="215.3" font-size="18.6" textLength="19" lengthAdjust="spacingAndGlyphs" font-family="DejaVu Sans,Liberation Sans,sans-serif" font-weight="200" fill="#fff" stroke="#fff" stroke-width="0.15" >75</text><text x="399.5" y="206.8" font-size="6.5" textLength="3.8" lengthAdjust="spacingAndGlyphs" font-family="DejaVu Sans,Liberation Sans,sans-serif" font-weight="200" fill="#fff" stroke="#fff" stroke-width="0.15" style="font-weight:400">0</text><text x="399.5" y="215.3" font-size="6.5" textLength="13.8" lengthAdjust="spacingAndGlyphs" font-family="DejaVu Sans,Liberation Sans,sans-serif" font-weight="200" fill="#fff" stroke="#fff" stroke-width="0.15" style="font-weight:400">0.05</text><text x="289.5" y="267" font-size="18.6" textLength="45" lengthAdjust="spacingAndGlyphs" font-family="DejaVu Sans,Liberation Sans,sans-serif" font-weight="200" fill="#fff" stroke="#fff" stroke-width="0.15" >42.43</text><text x="249" y="319" font-size="18.6" textLength="72.5" lengthAdjust="spacingAndGlyphs" font-family="DejaVu Sans,Liberation Sans,sans-serif" font-weight="200" fill="#fff" stroke="#fff" stroke-width="0.15" >31.83±0.1</text><text x="177" y="642" font-size="18.6" textLength="58.5" lengthAdjust="spacingAndGlyphs" font-family="DejaVu Sans,Liberation Sans,sans-serif" font-weight="200" fill="#fff" stroke="#fff" stroke-width="0.15" >1.5x45°</text><text x="299" y="411.8" font-size="18.3" textLength="18.5" lengthAdjust="spacingAndGlyphs" font-family="DejaVu Sans,Liberation Sans,sans-serif" font-weight="200" fill="#fff" stroke="#fff" stroke-width="0.15" >N6</text><path d="M317 415 L326 398 M301.3 413.7 H318 L309.3 427.2 Z" stroke="#fff" stroke-width="1" fill="none"/><g transform="translate(187.4 559) rotate(-90)"><text x="0" y="0" font-size="18.3" textLength="18.5" lengthAdjust="spacingAndGlyphs" font-family="DejaVu Sans,Liberation Sans,sans-serif" font-weight="200" fill="#fff" stroke="#fff" stroke-width="0.15" >N6</text></g><path d="M173 532 L189.6 540.5 M188.7 542.4 V556 L201 549 Z" stroke="#fff" stroke-width="1" fill="none"/><g transform="translate(612 715) rotate(-90)"><text x="0" y="0" font-size="18.6" textLength="58" lengthAdjust="spacingAndGlyphs" font-family="DejaVu Sans,Liberation Sans,sans-serif" font-weight="200" fill="#fff" stroke="#fff" stroke-width="0.15" ><tspan font-size="15" dy="-1.5">Ø</tspan><tspan dy="1.5">73.64</tspan></text></g><g transform="translate(665 730) rotate(-90)"><text x="0" y="0" font-size="18.6" textLength="90" lengthAdjust="spacingAndGlyphs" font-family="DejaVu Sans,Liberation Sans,sans-serif" font-weight="200" fill="#fff" stroke="#fff" stroke-width="0.15" ><tspan font-size="15" dy="-1.5">Ø</tspan><tspan dy="1.5">97.66 h11</tspan></text></g></svg>
</div>
<div class="t" style="left:129.5px;top:145px;width:40px;text-align:center;font-size:11px">-10</div>
<div class="vl" style="left:149px;top:159px;height:7px;background:#1c1c1c"></div>
<div class="t" style="left:181.5px;top:145px;width:40px;text-align:center;font-size:11px">0</div>
<div class="vl" style="left:201px;top:159px;height:7px;background:#1c1c1c"></div>
<div class="t" style="left:233.5px;top:145px;width:40px;text-align:center;font-size:11px">10</div>
<div class="vl" style="left:253px;top:159px;height:7px;background:#1c1c1c"></div>
<div class="t" style="left:285.5px;top:145px;width:40px;text-align:center;font-size:11px">20</div>
<div class="vl" style="left:305px;top:159px;height:7px;background:#1c1c1c"></div>
<div class="t" style="left:337.5px;top:145px;width:40px;text-align:center;font-size:11px">30</div>
<div class="vl" style="left:357px;top:159px;height:7px;background:#1c1c1c"></div>
<div class="t" style="left:388.5px;top:145px;width:40px;text-align:center;font-size:11px">40</div>
<div class="vl" style="left:408px;top:159px;height:7px;background:#1c1c1c"></div>
<div class="t" style="left:440.5px;top:145px;width:40px;text-align:center;font-size:11px">50</div>
<div class="vl" style="left:460px;top:159px;height:7px;background:#1c1c1c"></div>
<div class="t" style="left:492.5px;top:145px;width:40px;text-align:center;font-size:11px">60</div>
<div class="vl" style="left:512px;top:159px;height:7px;background:#1c1c1c"></div>
<div class="t" style="left:544.5px;top:145px;width:40px;text-align:center;font-size:11px">70</div>
<div class="vl" style="left:564px;top:159px;height:7px;background:#1c1c1c"></div>
<div class="t" style="left:596.5px;top:145px;width:40px;text-align:center;font-size:11px">80</div>
<div class="vl" style="left:616px;top:159px;height:7px;background:#1c1c1c"></div>
<div class="t" style="left:647.5px;top:145px;width:40px;text-align:center;font-size:11px">90</div>
<div class="vl" style="left:667px;top:159px;height:7px;background:#1c1c1c"></div>
<div class="t" style="left:699.5px;top:145px;width:40px;text-align:center;font-size:11px">100</div>
<div class="vl" style="left:719px;top:159px;height:7px;background:#1c1c1c"></div>
<svg style="left:486px;top:159px" width="8" height="5"><path d="M0.5 0 H7.5 L4 3.8 Z" fill="#111"/></svg>
<svg style="left:107px;top:493px" width="5" height="8"><path d="M0.5 0.3 V7.2 L4.2 3.7 Z" fill="#111"/></svg>
<div class="abs" style="left:749px;top:142px;width:17px;height:24px;background:#f0f0f0;border:1px solid #fff;border-top-color:#a0a0a0;border-left-color:#a0a0a0"></div>
<div class="sbv" style="left:749px;top:166px;height:572px"></div>
<svg style="left:755px;top:172.5px" width="7" height="4"><path d="M0 4 L3.5 0 L7 4 Z" fill="#3f3f3f"/></svg>
<svg style="left:755px;top:728px" width="7" height="4"><path d="M0 0 L3.5 4 L7 0 Z" fill="#3f3f3f"/></svg>
<div class="thv" style="left:750px;top:357px;width:15px;height:121px"></div>
<div class="abs" style="left:754px;top:413px;width:7px;height:8px;background:repeating-linear-gradient(180deg,#5f5f5f 0,#5f5f5f 1px,#fff 1px,#fff 2px,transparent 2px,transparent 3px)"></div>
<div class="abs" style="left:92px;top:738px;width:23px;height:17px;border:1px solid #fff;border-left-color:#a0a0a0;border-top-color:#a0a0a0;background:#f0f0f0"></div>
<div class="sbh" style="left:115px;top:738px;width:590px"></div>
<svg style="left:121px;top:743px" width="4" height="7"><path d="M4 0 L0 3.5 L4 7 Z" fill="#3f3f3f"/></svg>
<svg style="left:696px;top:743px" width="4" height="7"><path d="M0 0 L4 3.5 L0 7 Z" fill="#3f3f3f"/></svg>
<div class="thh" style="left:317px;top:739px;width:129px;height:15px"></div>
<div class="abs" style="left:377px;top:743px;width:8px;height:7px;background:repeating-linear-gradient(90deg,#5f5f5f 0,#5f5f5f 1px,#fff 1px,#fff 2px,transparent 2px,transparent 3px)"></div>
<div class="t" style="font-size:11px;line-height:11px;letter-spacing:-0.219px;left:727.00px;top:742.00px;">10 / 100</div>
<div class="dock" style="left:770px;top:120px;width:262px"></div>
<div class="t" style="font-size:11px;line-height:11px;letter-spacing:-0.044px;left:771.30px;top:125.00px;">Property Editor</div>
<svg style="left:1003px;top:125px" width="9" height="9"><path d="M2.5 0.5 H8.5 V5.5 H6.5 M0.5 3 H6.5 V8.5 H0.5 Z M2.5 0.5 V3" fill="none" stroke="#000" stroke-width="1"/><path d="M0 3.5H7M2 1H9" stroke="#000" stroke-width="1"/></svg>
<svg style="left:1018px;top:125px" width="9" height="9"><path d="M1 1 L8 8 M8 1 L1 8" stroke="#000" stroke-width="1.6"/></svg>
<div class="abs" style="left:770px;top:141px;width:262px;height:371px;border:1px solid #a0a0a0;border-right-color:#828790;border-bottom-color:#828790;background:#f0f0f0;overflow:hidden" id="pe">
<div class="t" style="font-size:11px;line-height:11px;letter-spacing:-0.171px;right:205.17px;top:14.00px;">Selection:</div>
<div class="cmb" style="left:62px;top:9px;width:172px;height:20px"><i style="top:7px"></i></div>
<div class="t" style="font-size:11px;line-height:11px;letter-spacing:-0.287px;left:65.70px;top:14.00px;">Line (1)</div>
<div class="grp" style="left:10px;top:41px;width:224px;height:156px"><b style="width:42px;height:13px"></b></div>
<div class="t" style="font-size:11px;line-height:11px;letter-spacing:-0.404px;left:17.30px;top:37.00px;">General</div>
<div class="t" style="font-size:11px;line-height:11px;letter-spacing:-0.012px;right:182.11px;top:60.00px;">Layer:</div>
<div class="cmb" style="left:85px;top:55px;width:114px;height:20px"><i style="top:7px"></i></div>
<div class="t" style="font-size:11px;line-height:11px;letter-spacing:-0.075px;left:88.60px;top:60.00px;">construction</div>
<svg style="left:209px;top:60px" width="10" height="10"><path d="M5 0.5V9.5M0.5 5H9.5" stroke="#c81010" stroke-width="2"/></svg>
<div class="t" style="font-size:11px;line-height:11px;letter-spacing:-0.173px;right:182.27px;top:83.00px;">Color:</div>
<div class="cmb" style="left:85px;top:77px;width:139px;height:22px"><b style="position:absolute;left:4px;top:5px;width:32px;height:10px;border:1px solid #000;background:#fff"></b><i style="top:8px"></i></div>
<div class="t" style="font-size:11px;line-height:11px;letter-spacing:-0.301px;left:124.40px;top:83.00px;">By Layer</div>
<div class="t" style="font-size:11px;line-height:11px;letter-spacing:-0.113px;right:182.21px;top:107.00px;">Lineweight:</div>
<div class="cmb" style="left:85px;top:101px;width:139px;height:22px"><b style="position:absolute;left:4px;top:10px;width:32px;height:1px;background:#000"></b><i style="top:8px"></i></div>
<div class="t" style="font-size:11px;line-height:11px;letter-spacing:-0.301px;left:124.40px;top:107.00px;">By Layer</div>
<div class="t" style="font-size:11px;line-height:11px;letter-spacing:-0.016px;right:182.12px;top:131.00px;">Linetype:</div>
<div class="cmb" style="left:85px;top:125px;width:139px;height:22px"><i style="top:8px"></i></div>
<div class="t" style="font-size:11px;line-height:11px;letter-spacing:-0.301px;left:124.40px;top:131.00px;">By Layer</div>
<div class="t" style="font-size:11px;line-height:11px;letter-spacing:-0.054px;right:182.15px;top:154.00px;">Draw Order:</div>
<div class="fld" style="left:85px;top:149px;width:139px;height:20px"></div>
<div class="t" style="font-size:11px;line-height:11px;letter-spacing:-0.417px;left:88.60px;top:155.00px;">30</div>
<div class="t" style="font-size:11px;line-height:11px;letter-spacing:-0.216px;right:182.32px;top:176.00px;">Handle:</div>
<div class="fld" style="background:#f0f0f0;border-color:#d9d9d9;left:85px;top:171px;width:139px;height:20px"></div>
<div class="t" style="font-size:11px;line-height:11px;letter-spacing:-0.038px;left:88.60px;top:177.00px;">0x70</div>
<div class="grp" style="left:10px;top:210px;width:224px;height:200px"><b style="width:52px;height:13px"></b></div>
<div class="t" style="font-size:11px;line-height:11px;letter-spacing:-0.211px;left:17.30px;top:206.00px;">Geometry</div>
<div class="t" style="font-size:11px;line-height:11px;letter-spacing:-0.042px;right:205.04px;top:232.00px;">Length:</div>
<div class="fld" style="left:62px;top:227px;width:162px;height:20px"></div>
<div class="t" style="font-size:11px;line-height:11px;letter-spacing:-0.450px;left:66.30px;top:233.00px;">120</div>
<div class="t" style="font-size:11px;line-height:11px;letter-spacing:-0.165px;right:205.16px;top:256.00px;">Angle:</div>
<div class="fld" style="left:62px;top:251px;width:162px;height:20px"></div>
<div class="t" style="font-size:11px;line-height:11px;left:66.30px;top:257.00px;">0</div>
<div class="t" style="font-size:11px;line-height:11px;letter-spacing:0.526px;font-weight:bold;left:18.60px;top:277.00px;">Start Point</div>
<div class="t" style="font-size:11px;line-height:11px;letter-spacing:-0.447px;right:205.45px;top:297.00px;">X:</div>
<div class="fld" style="left:62px;top:292px;width:162px;height:20px"></div>
<div class="t" style="font-size:11px;line-height:11px;left:66.30px;top:298.00px;">0</div>
<div class="t" style="font-size:11px;line-height:11px;letter-spacing:-0.143px;right:205.14px;top:321.00px;">Y:</div>
<div class="fld" style="left:62px;top:316px;width:162px;height:20px"></div>
<div class="t" style="font-size:11px;line-height:11px;letter-spacing:0.035px;left:66.30px;top:322.00px;">36.82</div>
<div class="t" style="font-size:11px;line-height:11px;letter-spacing:0.131px;font-weight:bold;left:18.60px;top:341.00px;">End Point</div>
<div class="t" style="font-size:11px;line-height:11px;letter-spacing:-0.447px;right:205.45px;top:362.00px;">X:</div>
<div class="fld" style="left:62px;top:357px;width:162px;height:20px"></div>
<div class="t" style="font-size:11px;line-height:11px;letter-spacing:-0.450px;left:66.30px;top:363.00px;">120</div>
<div class="sbv" style="left:244px;top:0;width:16px;height:368px"></div>
<svg style="left:249px;top:7px" width="7" height="4"><path d="M0 4 L3.5 0 L7 4 Z" fill="#3f3f3f"/></svg>
<svg style="left:249px;top:360px" width="7" height="4"><path d="M0 0 L3.5 4 L7 0 Z" fill="#3f3f3f"/></svg>
<div class="thv" style="left:244px;top:18px;width:16px;height:253px"></div>
<div class="abs" style="left:249px;top:141px;width:7px;height:8px;background:repeating-linear-gradient(180deg,#5f5f5f 0,#5f5f5f 1px,#fff 1px,#fff 2px,transparent 2px,transparent 3px)"></div>
</div>
<div class="dock" style="left:770px;top:518px;width:262px"></div>
<div class="t" style="font-size:11px;line-height:11px;letter-spacing:-0.169px;left:771.30px;top:523.00px;">Layer List</div>
<svg style="left:1003px;top:523px" width="9" height="9"><path d="M2.5 0.5 H8.5 V5.5 H6.5 M0.5 3 H6.5 V8.5 H0.5 Z M2.5 0.5 V3" fill="none" stroke="#000" stroke-width="1"/><path d="M0 3.5H7M2 1H9" stroke="#000" stroke-width="1"/></svg>
<svg style="left:1018px;top:523px" width="9" height="9"><path d="M1 1 L8 8 M8 1 L1 8" stroke="#000" stroke-width="1.6"/></svg>
<div class="lbtn" style="left:771px;width:50px"></div>
<div class="lbtn" style="left:824px;width:50px"></div>
<div class="lbtn" style="left:876px;width:50px"></div>
<div class="lbtn" style="border-color:#b5b5b5;background:#f4f4f4;left:929px;width:50px"></div>
<div class="lbtn" style="left:981px;width:51px"></div>
<svg style="left:789px;top:544px" width="15" height="11" opacity="1"><path d="M0.3 5.6 Q3 0.5 7.5 0.5 Q12 0.5 14.7 5.6 Q12 10.3 7.5 10.3 Q3 10.3 0.3 5.6 Z" fill="#111"/><path d="M2.6 5.8 Q4.6 2.8 7.5 2.8 Q10.4 2.8 12.4 5.8 Q10.4 8.6 7.5 8.6 Q4.6 8.6 2.6 5.8 Z" fill="#fff"/><circle cx="7.5" cy="5.6" r="2.5" fill="#111"/><circle cx="6.7" cy="4.7" r="0.8" fill="#fff"/></svg>
<svg style="left:841px;top:544px" width="15" height="11" opacity="0.8"><path d="M0.3 5.6 Q3 0.5 7.5 0.5 Q12 0.5 14.7 5.6 Q12 10.3 7.5 10.3 Q3 10.3 0.3 5.6 Z" fill="#8a8a8a"/><path d="M2.6 5.8 Q4.6 2.8 7.5 2.8 Q10.4 2.8 12.4 5.8 Q10.4 8.6 7.5 8.6 Q4.6 8.6 2.6 5.8 Z" fill="#fff"/><circle cx="7.5" cy="5.6" r="2.5" fill="#8a8a8a"/><circle cx="6.7" cy="4.7" r="0.8" fill="#fff"/></svg>
<svg style="left:895px;top:544px" width="12" height="12"><path d="M6 0.5V11.5M0.5 6H11.5" stroke="#c81010" stroke-width="2.2"/></svg>
<svg style="left:948px;top:549px" width="11" height="3"><path d="M0 1.5H11" stroke="#9a9a9a" stroke-width="2"/></svg>
<svg style="left:998px;top:542px" width="18" height="17"><path d="M1 15.5 L2.5 11 L13 0.8 L16.5 4 L6 14 Z" fill="#f0a838" stroke="#b8741a" stroke-width="0.7"/><path d="M11.5 2.3 L13 0.8 L16.5 4 L15 5.5 Z" fill="#e04848"/><path d="M1 15.5 L2.5 11 L6 14 Z" fill="#f4dcb0"/><path d="M1 15.5 L1.6 13.7 L3 15 Z" fill="#333"/></svg>
<div class="abs" style="left:770px;top:561px;width:263px;height:194px;background:#fff;border:1px solid #828790"></div>
<div class="abs" style="left:773px;top:563px;width:258px;height:17px;border:1px solid #d9d9d9;border-radius:2px;background:linear-gradient(180deg,#f8f8f8,#e5e5e5)"></div>
<svg style="left:775px;top:567px" width="15" height="11" opacity="1"><path d="M0.3 5.6 Q3 0.5 7.5 0.5 Q12 0.5 14.7 5.6 Q12 10.3 7.5 10.3 Q3 10.3 0.3 5.6 Z" fill="#1c3a5e"/><path d="M2.6 5.8 Q4.6 2.8 7.5 2.8 Q10.4 2.8 12.4 5.8 Q10.4 8.6 7.5 8.6 Q4.6 8.6 2.6 5.8 Z" fill="#fff"/><circle cx="7.5" cy="5.6" r="2.5" fill="#1c3a5e"/><circle cx="6.7" cy="4.7" r="0.8" fill="#fff"/></svg>
<svg style="left:795px;top:565px" width="11" height="14"><path d="M2.5 7 V4.5 Q2.5 1 5.5 1 Q8.5 1 8.5 4.5 V7" fill="none" stroke="#7f9fc6" stroke-width="1.5"/><rect x="0.5" y="6" width="10" height="7.5" rx="0.8" fill="#7f9fc6"/></svg>
<div class="t" style="font-size:12px;line-height:12px;letter-spacing:-0.673px;left:813.30px;top:567.00px;">0</div>
<svg style="left:775px;top:585px" width="15" height="11" opacity="1"><path d="M0.3 5.6 Q3 0.5 7.5 0.5 Q12 0.5 14.7 5.6 Q12 10.3 7.5 10.3 Q3 10.3 0.3 5.6 Z" fill="#111"/><path d="M2.6 5.8 Q4.6 2.8 7.5 2.8 Q10.4 2.8 12.4 5.8 Q10.4 8.6 7.5 8.6 Q4.6 8.6 2.6 5.8 Z" fill="#fff"/><circle cx="7.5" cy="5.6" r="2.5" fill="#111"/><circle cx="6.7" cy="4.7" r="0.8" fill="#fff"/></svg>
<svg style="left:795px;top:583px" width="11" height="14"><path d="M2.5 7 V4.5 Q2.5 1 5.5 1 Q8.5 1 8.5 4.5 V7" fill="none" stroke="#a4a4a4" stroke-width="1.5"/><rect x="0.5" y="6" width="10" height="7.5" rx="0.8" fill="#a4a4a4"/></svg>
<div class="t" style="font-size:12px;line-height:12px;letter-spacing:-0.912px;left:813.30px;top:585.00px;">axes</div>
<svg style="left:775px;top:603px" width="15" height="11" opacity="1"><path d="M0.3 5.6 Q3 0.5 7.5 0.5 Q12 0.5 14.7 5.6 Q12 10.3 7.5 10.3 Q3 10.3 0.3 5.6 Z" fill="#9a9a9a"/><path d="M2.6 5.8 Q4.6 2.8 7.5 2.8 Q10.4 2.8 12.4 5.8 Q10.4 8.6 7.5 8.6 Q4.6 8.6 2.6 5.8 Z" fill="#fff"/><circle cx="7.5" cy="5.6" r="2.5" fill="#9a9a9a"/><circle cx="6.7" cy="4.7" r="0.8" fill="#fff"/></svg>
<svg style="left:795px;top:601px" width="11" height="14"><path d="M2.5 7 V4.5 Q2.5 1 5.5 1 Q8.5 1 8.5 4.5 V7" fill="none" stroke="#a4a4a4" stroke-width="1.5"/><rect x="0.5" y="6" width="10" height="7.5" rx="0.8" fill="#a4a4a4"/></svg>
<div class="t" style="font-size:12px;line-height:12px;letter-spacing:0.109px;left:813.30px;top:603.00px;">construction</div>
<svg style="left:775px;top:621px" width="15" height="11" opacity="1"><path d="M0.3 5.6 Q3 0.5 7.5 0.5 Q12 0.5 14.7 5.6 Q12 10.3 7.5 10.3 Q3 10.3 0.3 5.6 Z" fill="#111"/><path d="M2.6 5.8 Q4.6 2.8 7.5 2.8 Q10.4 2.8 12.4 5.8 Q10.4 8.6 7.5 8.6 Q4.6 8.6 2.6 5.8 Z" fill="#fff"/><circle cx="7.5" cy="5.6" r="2.5" fill="#111"/><circle cx="6.7" cy="4.7" r="0.8" fill="#fff"/></svg>
<svg style="left:795px;top:619px" width="11" height="14"><path d="M2.5 7 V4.5 Q2.5 1 5.5 1 Q8.5 1 8.5 4.5 V7" fill="none" stroke="#a4a4a4" stroke-width="1.5"/><rect x="0.5" y="6" width="10" height="7.5" rx="0.8" fill="#a4a4a4"/></svg>
<div class="t" style="font-size:12px;line-height:12px;letter-spacing:0.197px;left:813.30px;top:621.00px;">contour</div>
<svg style="left:775px;top:639px" width="15" height="11" opacity="1"><path d="M0.3 5.6 Q3 0.5 7.5 0.5 Q12 0.5 14.7 5.6 Q12 10.3 7.5 10.3 Q3 10.3 0.3 5.6 Z" fill="#111"/><path d="M2.6 5.8 Q4.6 2.8 7.5 2.8 Q10.4 2.8 12.4 5.8 Q10.4 8.6 7.5 8.6 Q4.6 8.6 2.6 5.8 Z" fill="#fff"/><circle cx="7.5" cy="5.6" r="2.5" fill="#111"/><circle cx="6.7" cy="4.7" r="0.8" fill="#fff"/></svg>
<svg style="left:795px;top:637px" width="11" height="14"><path d="M2.5 7 V4.5 Q2.5 1 5.5 1 Q8.5 1 8.5 4.5 V7" fill="none" stroke="#a4a4a4" stroke-width="1.5"/><rect x="0.5" y="6" width="10" height="7.5" rx="0.8" fill="#a4a4a4"/></svg>
<div class="t" style="font-size:12px;line-height:12px;letter-spacing:0.288px;left:813.30px;top:639.00px;">dim</div>
<svg style="left:775px;top:657px" width="15" height="11" opacity="1"><path d="M0.3 5.6 Q3 0.5 7.5 0.5 Q12 0.5 14.7 5.6 Q12 10.3 7.5 10.3 Q3 10.3 0.3 5.6 Z" fill="#111"/><path d="M2.6 5.8 Q4.6 2.8 7.5 2.8 Q10.4 2.8 12.4 5.8 Q10.4 8.6 7.5 8.6 Q4.6 8.6 2.6 5.8 Z" fill="#fff"/><circle cx="7.5" cy="5.6" r="2.5" fill="#111"/><circle cx="6.7" cy="4.7" r="0.8" fill="#fff"/></svg>
<svg style="left:795px;top:655px" width="11" height="14"><path d="M2.5 7 V4.5 Q2.5 1 5.5 1 Q8.5 1 8.5 4.5 V7" fill="none" stroke="#a4a4a4" stroke-width="1.5"/><rect x="0.5" y="6" width="10" height="7.5" rx="0.8" fill="#a4a4a4"/></svg>
<div class="t" style="font-size:12px;line-height:12px;letter-spacing:-0.071px;left:813.30px;top:657.00px;">hatch</div>
<svg style="left:775px;top:675px" width="15" height="11" opacity="1"><path d="M0.3 5.6 Q3 0.5 7.5 0.5 Q12 0.5 14.7 5.6 Q12 10.3 7.5 10.3 Q3 10.3 0.3 5.6 Z" fill="#111"/><path d="M2.6 5.8 Q4.6 2.8 7.5 2.8 Q10.4 2.8 12.4 5.8 Q10.4 8.6 7.5 8.6 Q4.6 8.6 2.6 5.8 Z" fill="#fff"/><circle cx="7.5" cy="5.6" r="2.5" fill="#111"/><circle cx="6.7" cy="4.7" r="0.8" fill="#fff"/></svg>
<svg style="left:795px;top:673px" width="11" height="14"><path d="M2.5 7 V4.5 Q2.5 1 5.5 1 Q8.5 1 8.5 4.5 V7" fill="none" stroke="#a4a4a4" stroke-width="1.5"/><rect x="0.5" y="6" width="10" height="7.5" rx="0.8" fill="#a4a4a4"/></svg>
<div class="t" style="font-size:12px;line-height:12px;letter-spacing:-0.109px;left:813.30px;top:675.00px;">hatch_border</div>
<div class="abs" style="left:8px;top:757px;width:1024px;height:39px;background:#fff;border:1px solid #828790;border-top-color:#e6e6e6;border-bottom-color:#b8b8b8;overflow:hidden">
<div class="t" style="font-size:11px;line-height:11px;letter-spacing:-0.537px;color:#0000c8;font-style:italic;left:4.00px;top:-4.00px;">Command:</div>
<div class="t" style="font-size:11px;line-height:11px;letter-spacing:-0.126px;color:#0000c8;left:58.00px;top:-4.00px;">snapauto</div>
<div class="t" style="font-size:11px;line-height:11px;letter-spacing:-0.537px;color:#0000c8;font-style:italic;left:4.00px;top:9.00px;">Command:</div>
<div class="t" style="font-size:11px;line-height:11px;letter-spacing:-0.126px;color:#0000c8;left:58.00px;top:9.00px;">snapauto</div>
<div class="t" style="font-size:11px;line-height:11px;letter-spacing:-0.537px;color:#0000c8;font-style:italic;left:4.00px;top:22.00px;">Command:</div>
<div class="t" style="font-size:11px;line-height:11px;letter-spacing:-0.454px;color:#0000c8;left:58.00px;top:22.00px;">linemenu</div>
</div>
<div class="sbv" style="left:1015px;top:758px;width:16px;height:37px"></div>
<svg style="left:1020px;top:766px" width="7" height="4"><path d="M0 4 L3.5 0 L7 4 Z" fill="#3f3f3f"/></svg>
<svg style="left:1020px;top:785px" width="7" height="4"><path d="M0 0 L3.5 4 L7 0 Z" fill="#3f3f3f"/></svg>
<div class="thv" style="left:1016px;top:775px;width:15px;height:4px"></div>
<div class="abs" style="left:8px;top:796px;width:1024px;height:23px;background:#fff;border:1px solid #828790;border-top:none;border-bottom-color:#7c8490"></div>
<div class="t" style="font-size:11px;line-height:11px;letter-spacing:-0.599px;left:9.00px;top:803.00px;">Command:</div>
<div class="t" style="font-size:11px;line-height:11px;letter-spacing:-0.205px;left:10.50px;top:825.00px;">55.6638,36.4368</div>
<div class="t" style="font-size:11px;line-height:11px;left:10.50px;top:841.00px;">-</div>
<div class="t" style="font-size:11px;line-height:11px;letter-spacing:-0.077px;left:165.00px;top:825.00px;">66.529&lt;33.2083</div>
<div class="t" style="font-size:11px;line-height:11px;left:165.00px;top:841.00px;">-</div>
<div class="vl" style="left:161px;top:822px;height:31px;background:#bdbdbd"></div>
<div class="vl" style="left:316px;top:822px;height:31px;background:#bdbdbd"></div>
<div class="vl" style="left:577px;top:822px;height:31px;background:#bdbdbd"></div>
<div class="vl" style="left:776px;top:822px;height:31px;background:#bdbdbd"></div>
<div class="vl" style="left:909px;top:822px;height:31px;background:#bdbdbd"></div>
<div class="t" style="font-size:9.5px;line-height:9.5px;letter-spacing:-0.321px;right:613.32px;top:828.00px;">Select entity or region</div>
<div class="t" style="font-size:9.5px;line-height:9.5px;letter-spacing:-0.289px;right:613.29px;top:840.00px;">Move entity or reference</div>
<div class="t" style="font-size:9.5px;line-height:9.5px;letter-spacing:-0.325px;left:583.50px;top:828.00px;">Selected entities:</div>
<div class="t" style="font-size:9.5px;line-height:9.5px;letter-spacing:-0.394px;left:583.50px;top:840.00px;">1 Line on Layer "construction".</div>
<svg style="left:434px;top:822px" width="30" height="33"><defs><linearGradient id="gM" x1="0.2" y1="0" x2="0.8" y2="1"><stop offset="0" stop-color="#f4f4f4"/><stop offset="0.45" stop-color="#ffffff"/><stop offset="0.8" stop-color="#e9e9e9"/><stop offset="1" stop-color="#bdbdbd"/></linearGradient></defs><path d="M7.8 1.4 L9.6 3.4" stroke="#7a7a7a" stroke-width="1.3" stroke-linecap="round"/><path d="M2.7 5.7 Q5 3 10.4 3.2 Q15 3 18.5 4.9 Q24 9 26.7 15.9 Q28.5 21 25.1 25.6 Q21 30 16.5 30.4 Q11 30.5 7.3 27.1 Q3 22 2.5 14.4 Q2.2 8.5 2.7 5.7 Z" fill="url(#gM)" stroke="#a6a6a6" stroke-width="0.9"/><path d="M4 7 Q10 3.5 17.5 5.5 Q20 8 19 11.5 Q14 16 7 14 Q3.5 11 4 7 Z" fill="#e2e2e2" opacity="0.8"/><ellipse cx="12.9" cy="10.3" rx="1.6" ry="3.4" transform="rotate(-18 12.9 10.3)" fill="#3f6fe0"/><ellipse cx="12.5" cy="9.5" rx="0.6" ry="1.6" transform="rotate(-18 12.5 9.5)" fill="#9fb9f2"/></svg>
<div class="abs" style="left:1021px;top:845px;width:10px;height:10px;background-image:radial-gradient(circle at 1px 1px,#b0b0b0 0.9px,transparent 1.200px);background-size:3px 3px;clip-path:polygon(100% 0,100% 100%,0 100%)"></div>
<div class="abs" style="left:-8px;top:781px;width:1060px;height:26px;background:rgba(255,255,255,.55);border-top:1px solid rgba(200,200,200,.6);border-bottom:1px solid rgba(215,215,215,.6)"></div>
<div class="t" style="left:875.5px;top:783px;font-size:20.5px;line-height:20.5px;letter-spacing:-0.25px;color:#8a8a8a">Color<span style="color:#f5b88c">Mango</span>.com</div>
</div>
</div>
</div>
</body></html>
